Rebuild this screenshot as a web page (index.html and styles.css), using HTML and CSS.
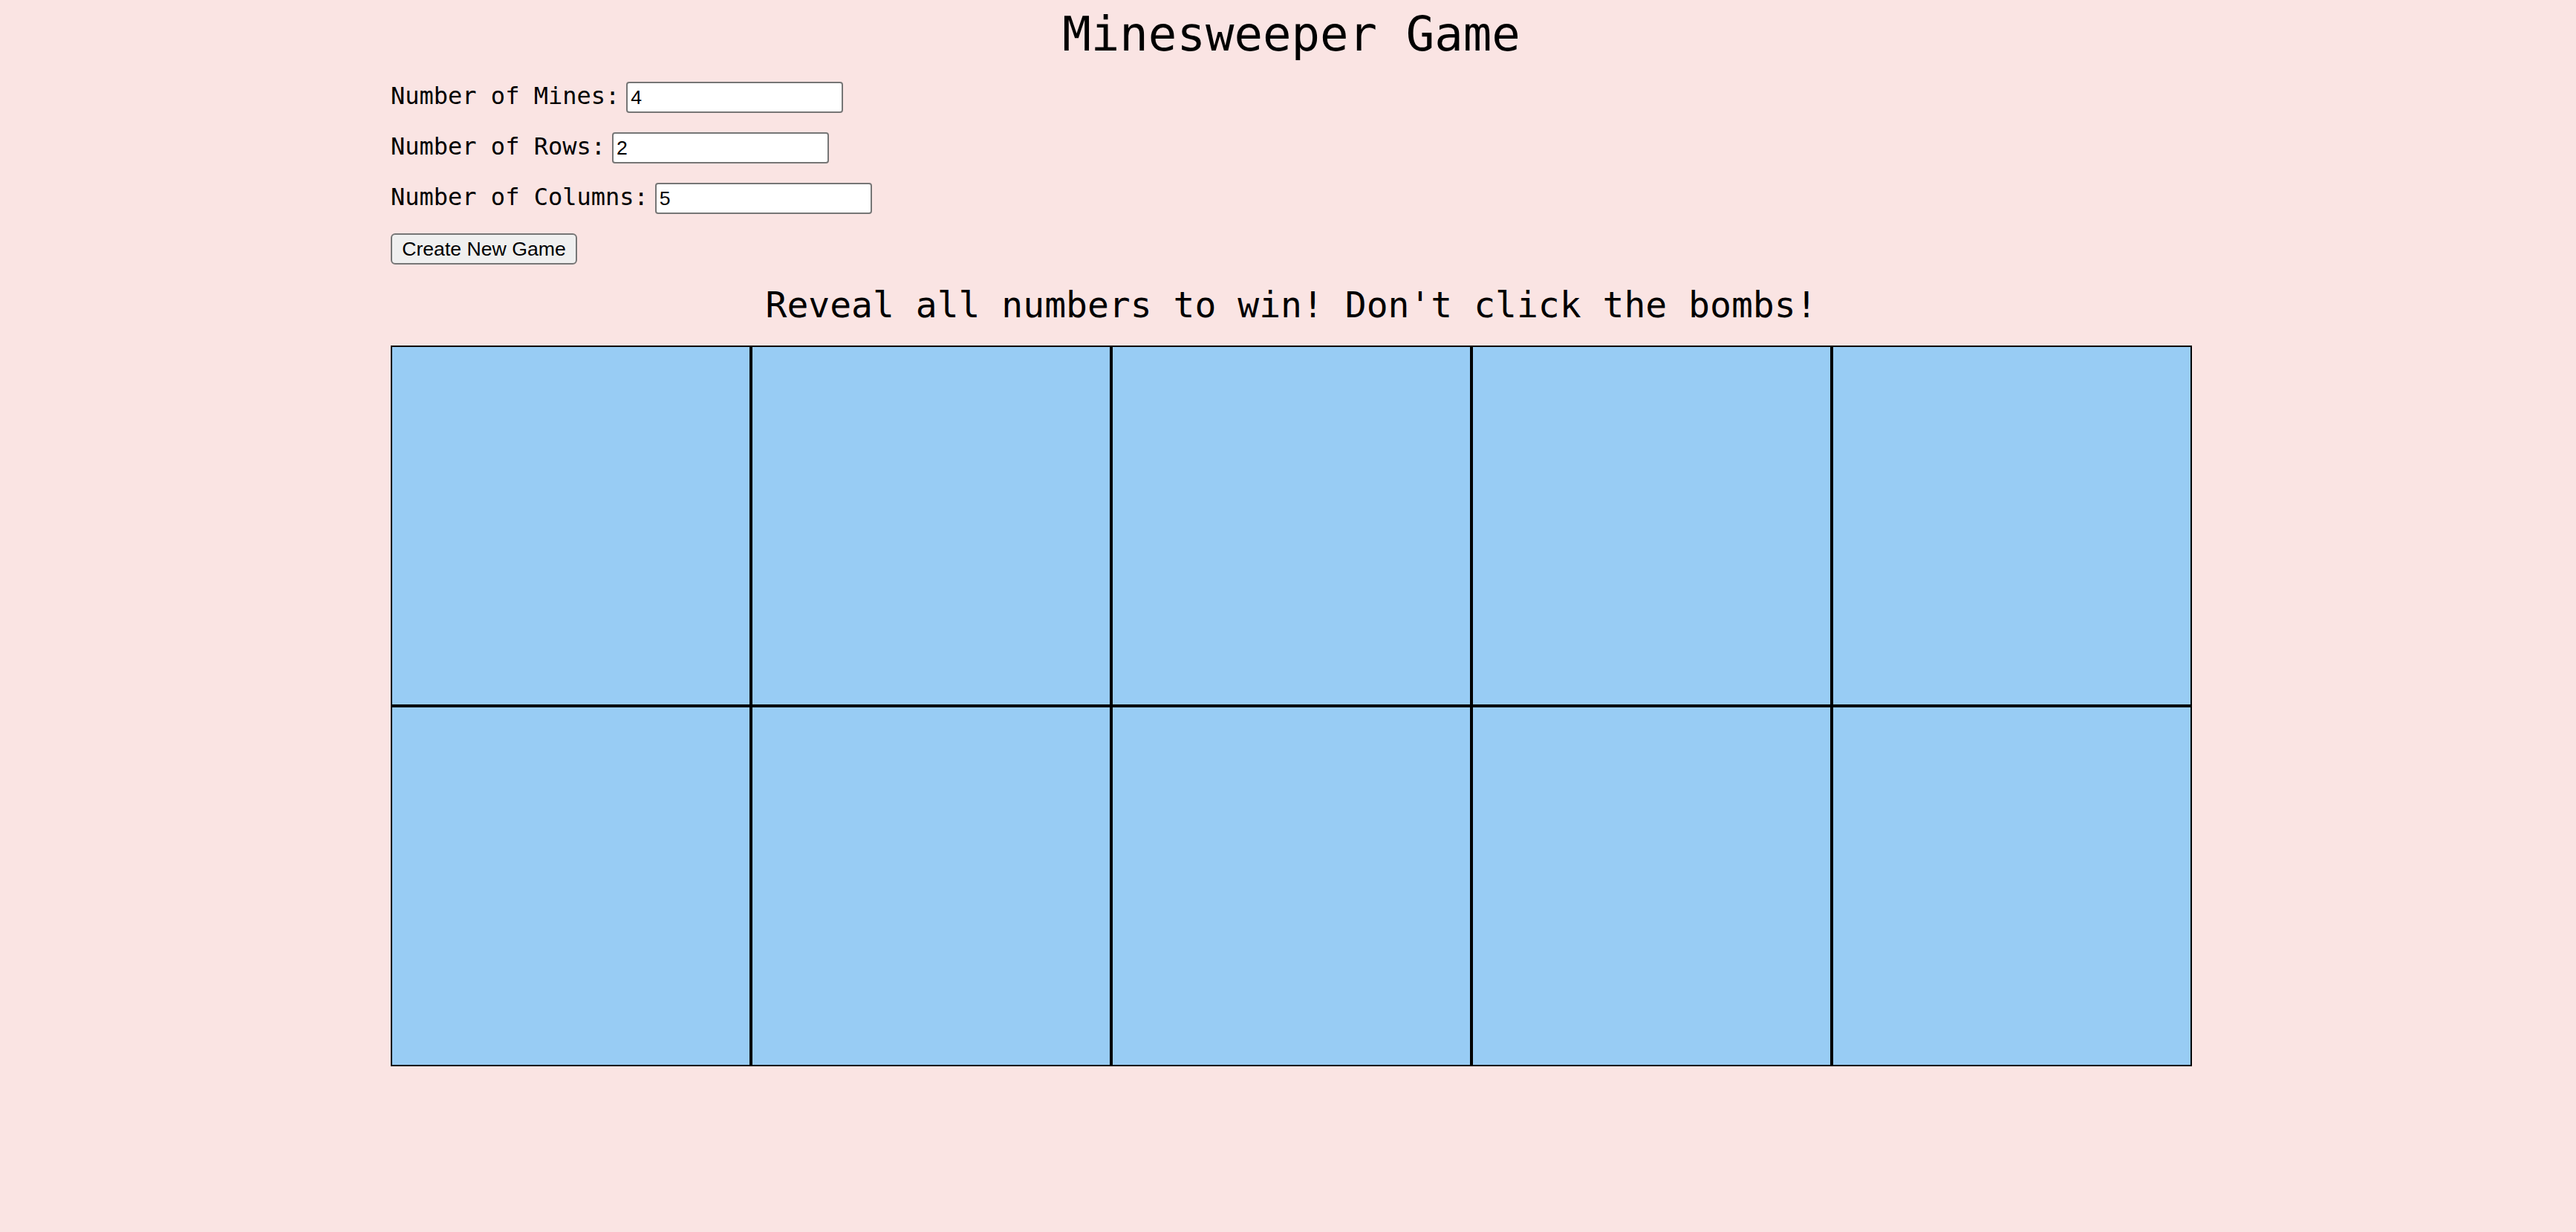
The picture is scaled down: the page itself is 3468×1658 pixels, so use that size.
FILE: index.html
```html
<!DOCTYPE html>
<html lang="en">
<head>
<meta charset="utf-8">
<title>Minesweeper Game</title>
<link rel="stylesheet" href="styles.css">
</head>
<body>
<main class="page">
  <h1 class="title">Minesweeper Game</h1>
  <form class="settings">
    <div class="field">
      <label class="field-label" for="mines">Number of Mines:</label>
      <input class="field-input" id="mines" type="text" value="4">
    </div>
    <div class="field">
      <label class="field-label" for="rows">Number of Rows:</label>
      <input class="field-input" id="rows" type="text" value="2">
    </div>
    <div class="field">
      <label class="field-label" for="cols">Number of Columns:</label>
      <input class="field-input" id="cols" type="text" value="5">
    </div>
    <div class="field">
      <button class="new-game" type="button">Create New Game</button>
    </div>
  </form>
  <h2 class="subtitle">Reveal all numbers to win! Don't click the bombs!</h2>
  <div class="board">
    <div class="cell"></div>
    <div class="cell"></div>
    <div class="cell"></div>
    <div class="cell"></div>
    <div class="cell"></div>
    <div class="cell"></div>
    <div class="cell"></div>
    <div class="cell"></div>
    <div class="cell"></div>
    <div class="cell"></div>
  </div>
</main>
</body>
</html>
```
FILE: styles.css
```css
* {
  box-sizing: border-box;
}

html, body {
  background: #fae4e3;
}

body {
  margin: 0;
  padding: 0 0 0 9px;
  font-family: "DejaVu Sans Mono", "Liberation Mono", monospace;
  color: #000;
  min-height: 1658px;
}

.page {
  width: 2425px;
  margin: 0 auto;
}

.title {
  margin: 10px 0 28px;
  font-size: 64px;
  line-height: 72px;
  font-weight: normal;
  text-align: center;
}

.settings {
  margin: 0;
}

.field {
  display: flex;
  align-items: center;
  height: 42px;
  margin-bottom: 26px;
}

.field:last-child {
  margin-bottom: 0;
}

.field-label {
  font-size: 32px;
  line-height: 36px;
  margin: 0 9px 4px 0;
}

.field-input {
  width: 292px;
  height: 42px;
  margin: 0;
  padding: 2px 4px;
  border: 2px solid #767676;
  border-radius: 4px;
  background: #fff;
  font-family: "Liberation Sans", Arial, sans-serif;
  font-size: 26.67px;
  color: #000;
}

.new-game {
  width: 251px;
  height: 42px;
  margin: 0;
  padding: 0 10px;
  border: 2px solid #767676;
  border-radius: 6px;
  background: #efefef;
  font-family: "Liberation Sans", Arial, sans-serif;
  font-size: 26.67px;
  color: #000;
  text-align: center;
}

.subtitle {
  margin: 27px 0 28px;
  font-size: 48px;
  line-height: 54px;
  font-weight: normal;
  text-align: center;
}

.board {
  display: grid;
  grid-template-columns: repeat(5, 485px);
  grid-auto-rows: 485px;
}

.cell {
  background: #98ccf4;
  border: 2px solid #000;
}
```
